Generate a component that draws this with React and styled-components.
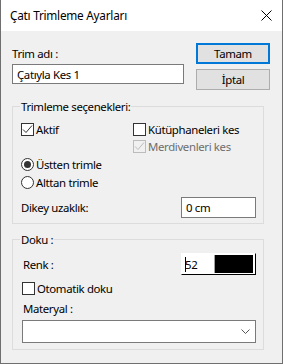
import React from 'react'
import styled, { createGlobalStyle } from 'styled-components'

const GlobalStyle = createGlobalStyle`
  body {
    margin: 0;
    background: #ffffff;
    font-family: "Noto Sans", "Open Sans", sans-serif;
    font-size: 11.4px;
    letter-spacing: -0.35px;
    color: #000;
  }
`

const StWindow = styled.div`
  width: 283px;
  height: 364px;
  box-sizing: border-box;
  border: 1px solid #6f6f6f;
  border-top: none;
  background: #f0f0f0;
  display: flex;
  flex-direction: column;
`

const StTitleBar = styled.div`
  height: 31px;
  flex: none;
  background: #ffffff;
  display: flex;
  align-items: center;
  justify-content: space-between;
  padding: 0 10px 0 9px;
`

const StTitle = styled.span`
  font-size: 11.8px;
  letter-spacing: -0.25px;
  line-height: 15px;
`

const StBody = styled.div`
  padding: 12px 12px 0 11px;
`

const StTopRow = styled.div`
  display: flex;
  gap: 12px;
`

const StLeftCol = styled.div`
  width: 172px;
  display: flex;
  flex-direction: column;
`

const StLabel = styled.div`
  line-height: 15px;
  margin-top: ${(p) => p.$top || 0}px;
  margin-left: ${(p) => p.$left || 0}px;
`

const StTextBox = styled.div`
  box-sizing: border-box;
  width: ${(p) => p.$width}px;
  height: ${(p) => p.$height || 20}px;
  margin-top: ${(p) => p.$top || 0}px;
  border: 1px solid #7a7a7a;
  background: #fff;
  display: flex;
  align-items: center;
  padding-left: 4px;
  line-height: 15px;
`

const StBtnCol = styled.div`
  display: flex;
  flex-direction: column;
  gap: 5px;
`

const StButton = styled.button`
  box-sizing: border-box;
  width: 74px;
  height: 21px;
  padding: 0;
  font-family: inherit;
  font-size: 11.4px;
  letter-spacing: -0.35px;
  color: #000;
  background: #e1e1e1;
  border: ${(p) => (p.$primary ? '2px solid #0078d7' : '1px solid #adadad')};
`

const StGroup = styled.fieldset`
  box-sizing: border-box;
  width: 252px;
  margin: ${(p) => p.$top}px 0 0 0;
  padding: ${(p) => p.$padTop}px 7px ${(p) => p.$padBottom}px 8px;
  border: 1px solid #dcdcdc;
  min-width: 0;
`

const StLegend = styled.legend`
  padding: 0 1px;
  margin-left: -1px;
  line-height: 15px;
`

const StChecks = styled.div`
  display: grid;
  grid-template-columns: 112px 1fr;
`

const StOption = styled.div`
  display: flex;
  align-items: center;
  gap: 2px;
  height: ${(p) => p.$height || 17}px;
  margin-left: ${(p) => p.$left || 0}px;
  margin-top: ${(p) => p.$top || 0}px;
  line-height: 15px;
  color: ${(p) => (p.$disabled ? '#6d6d6d' : '#000')};
`

const StBox = styled.span`
  box-sizing: border-box;
  width: 13px;
  height: 13px;
  flex: none;
  border: 1px solid ${(p) => (p.$disabled ? '#bcbcbc' : '#333')};
  background: ${(p) => (p.$disabled ? '#f0f0f0' : '#fff')};
  display: flex;
  align-items: center;
  justify-content: center;
`

const StRadio = styled.span`
  box-sizing: border-box;
  width: 13px;
  height: 13px;
  flex: none;
  border: 1px solid #333;
  border-radius: 50%;
  background: #fff;
  display: flex;
  align-items: center;
  justify-content: center;
  &::after {
    content: '';
    display: ${(p) => (p.$on ? 'block' : 'none')};
    width: 7px;
    height: 7px;
    border-radius: 50%;
    background: #333;
  }
`

const StFieldRow = styled.div`
  display: flex;
  align-items: center;
  justify-content: space-between;
  margin-top: ${(p) => p.$top || 0}px;
  height: ${(p) => p.$height}px;
`

const StColorPick = styled.div`
  box-sizing: border-box;
  width: 75px;
  height: 22px;
  border: 1px solid #000;
  border-top-color: #fff;
  border-left-color: #fff;
  background: #fff;
  padding: 1px 2px 1px 1px;
  display: flex;
`

const StColorText = styled.div`
  width: 32px;
  box-sizing: border-box;
  border-right: 1px solid #a0a0a0;
  display: flex;
  align-items: center;
  padding-left: 2px;
  line-height: 15px;
`

const StCaret = styled.span`
  width: 1px;
  height: 15px;
  background: #000;
  margin-right: -1px;
`

const StSwatch = styled.div`
  flex: 1;
  background: #000;
`

const StCombo = styled.div`
  box-sizing: border-box;
  width: 234px;
  height: 23px;
  margin: 4px 0 0 1px;
  border: 1px solid #7a7a7a;
  background: #fff;
  display: flex;
  align-items: center;
  justify-content: flex-end;
  padding-right: 5px;
`

const Check = ({ color }) => (
  <svg width="11" height="11" viewBox="0 0 11 11">
    <path d="M1 5.5 L4 8.5 L10 1.5" fill="none" stroke={color} strokeWidth="1" />
  </svg>
)

const CheckBox = ({ checked, disabled, label, left, top }) => (
  <StOption $disabled={disabled} $left={left} $top={top}>
    <StBox $disabled={disabled}>{checked && <Check color={disabled ? '#bcbcbc' : '#333'} />}</StBox>
    <span>{label}</span>
  </StOption>
)

const App = () => {
  return (
    <>
      <GlobalStyle />
      <StWindow>
        <StTitleBar>
          <StTitle>Çatı Trimleme Ayarları</StTitle>
          <svg width="11" height="11" viewBox="0 0 11 11">
            <path d="M0.5 0.5 L10.5 10.5 M10.5 0.5 L0.5 10.5" stroke="#000" strokeWidth="1" />
          </svg>
        </StTitleBar>
        <StBody>
          <StTopRow>
            <StLeftCol>
              <StLabel $top={3}>Trim adı :</StLabel>
              <StTextBox $width={172} $top={3}>Çatıyla Kes 1</StTextBox>
            </StLeftCol>
            <StBtnCol>
              <StButton $primary>Tamam</StButton>
              <StButton>İptal</StButton>
            </StBtnCol>
          </StTopRow>

          <StGroup $top={9} $padTop={7} $padBottom={5}>
            <StLegend>Trimleme seçenekleri:</StLegend>
            <StChecks>
              <CheckBox checked label="Aktif" />
              <CheckBox label="Kütüphaneleri kes" />
              <span />
              <CheckBox checked disabled label="Merdivenleri kes" />
            </StChecks>
            <StOption $height={18}>
              <StRadio $on />
              <span>Üstten trimle</span>
            </StOption>
            <StOption $height={18}>
              <StRadio />
              <span>Alttan trimle</span>
            </StOption>
            <StFieldRow $top={6} $height={21}>
              <StLabel>Dikey uzaklık:</StLabel>
              <StTextBox $width={75} $height={21}>0 cm</StTextBox>
            </StFieldRow>
          </StGroup>

          <StGroup $top={8} $padTop={6} $padBottom={6}>
            <StLegend>Doku :</StLegend>
            <StFieldRow $height={22}>
              <StLabel $left={2}>Renk :</StLabel>
              <StColorPick>
                <StColorText>
                  <StCaret />
                  52
                </StColorText>
                <StSwatch />
              </StColorPick>
            </StFieldRow>
            <CheckBox left={1} top={5} label="Otomatik doku" />
            <StLabel $top={4} $left={2}>Materyal :</StLabel>
            <StCombo>
              <svg width="9" height="5" viewBox="0 0 9 5">
                <path d="M0.5 0.5 L4.5 4.5 L8.5 0.5" fill="none" stroke="#555" strokeWidth="1" />
              </svg>
            </StCombo>
          </StGroup>
        </StBody>
      </StWindow>
    </>
  )
}

export default App
